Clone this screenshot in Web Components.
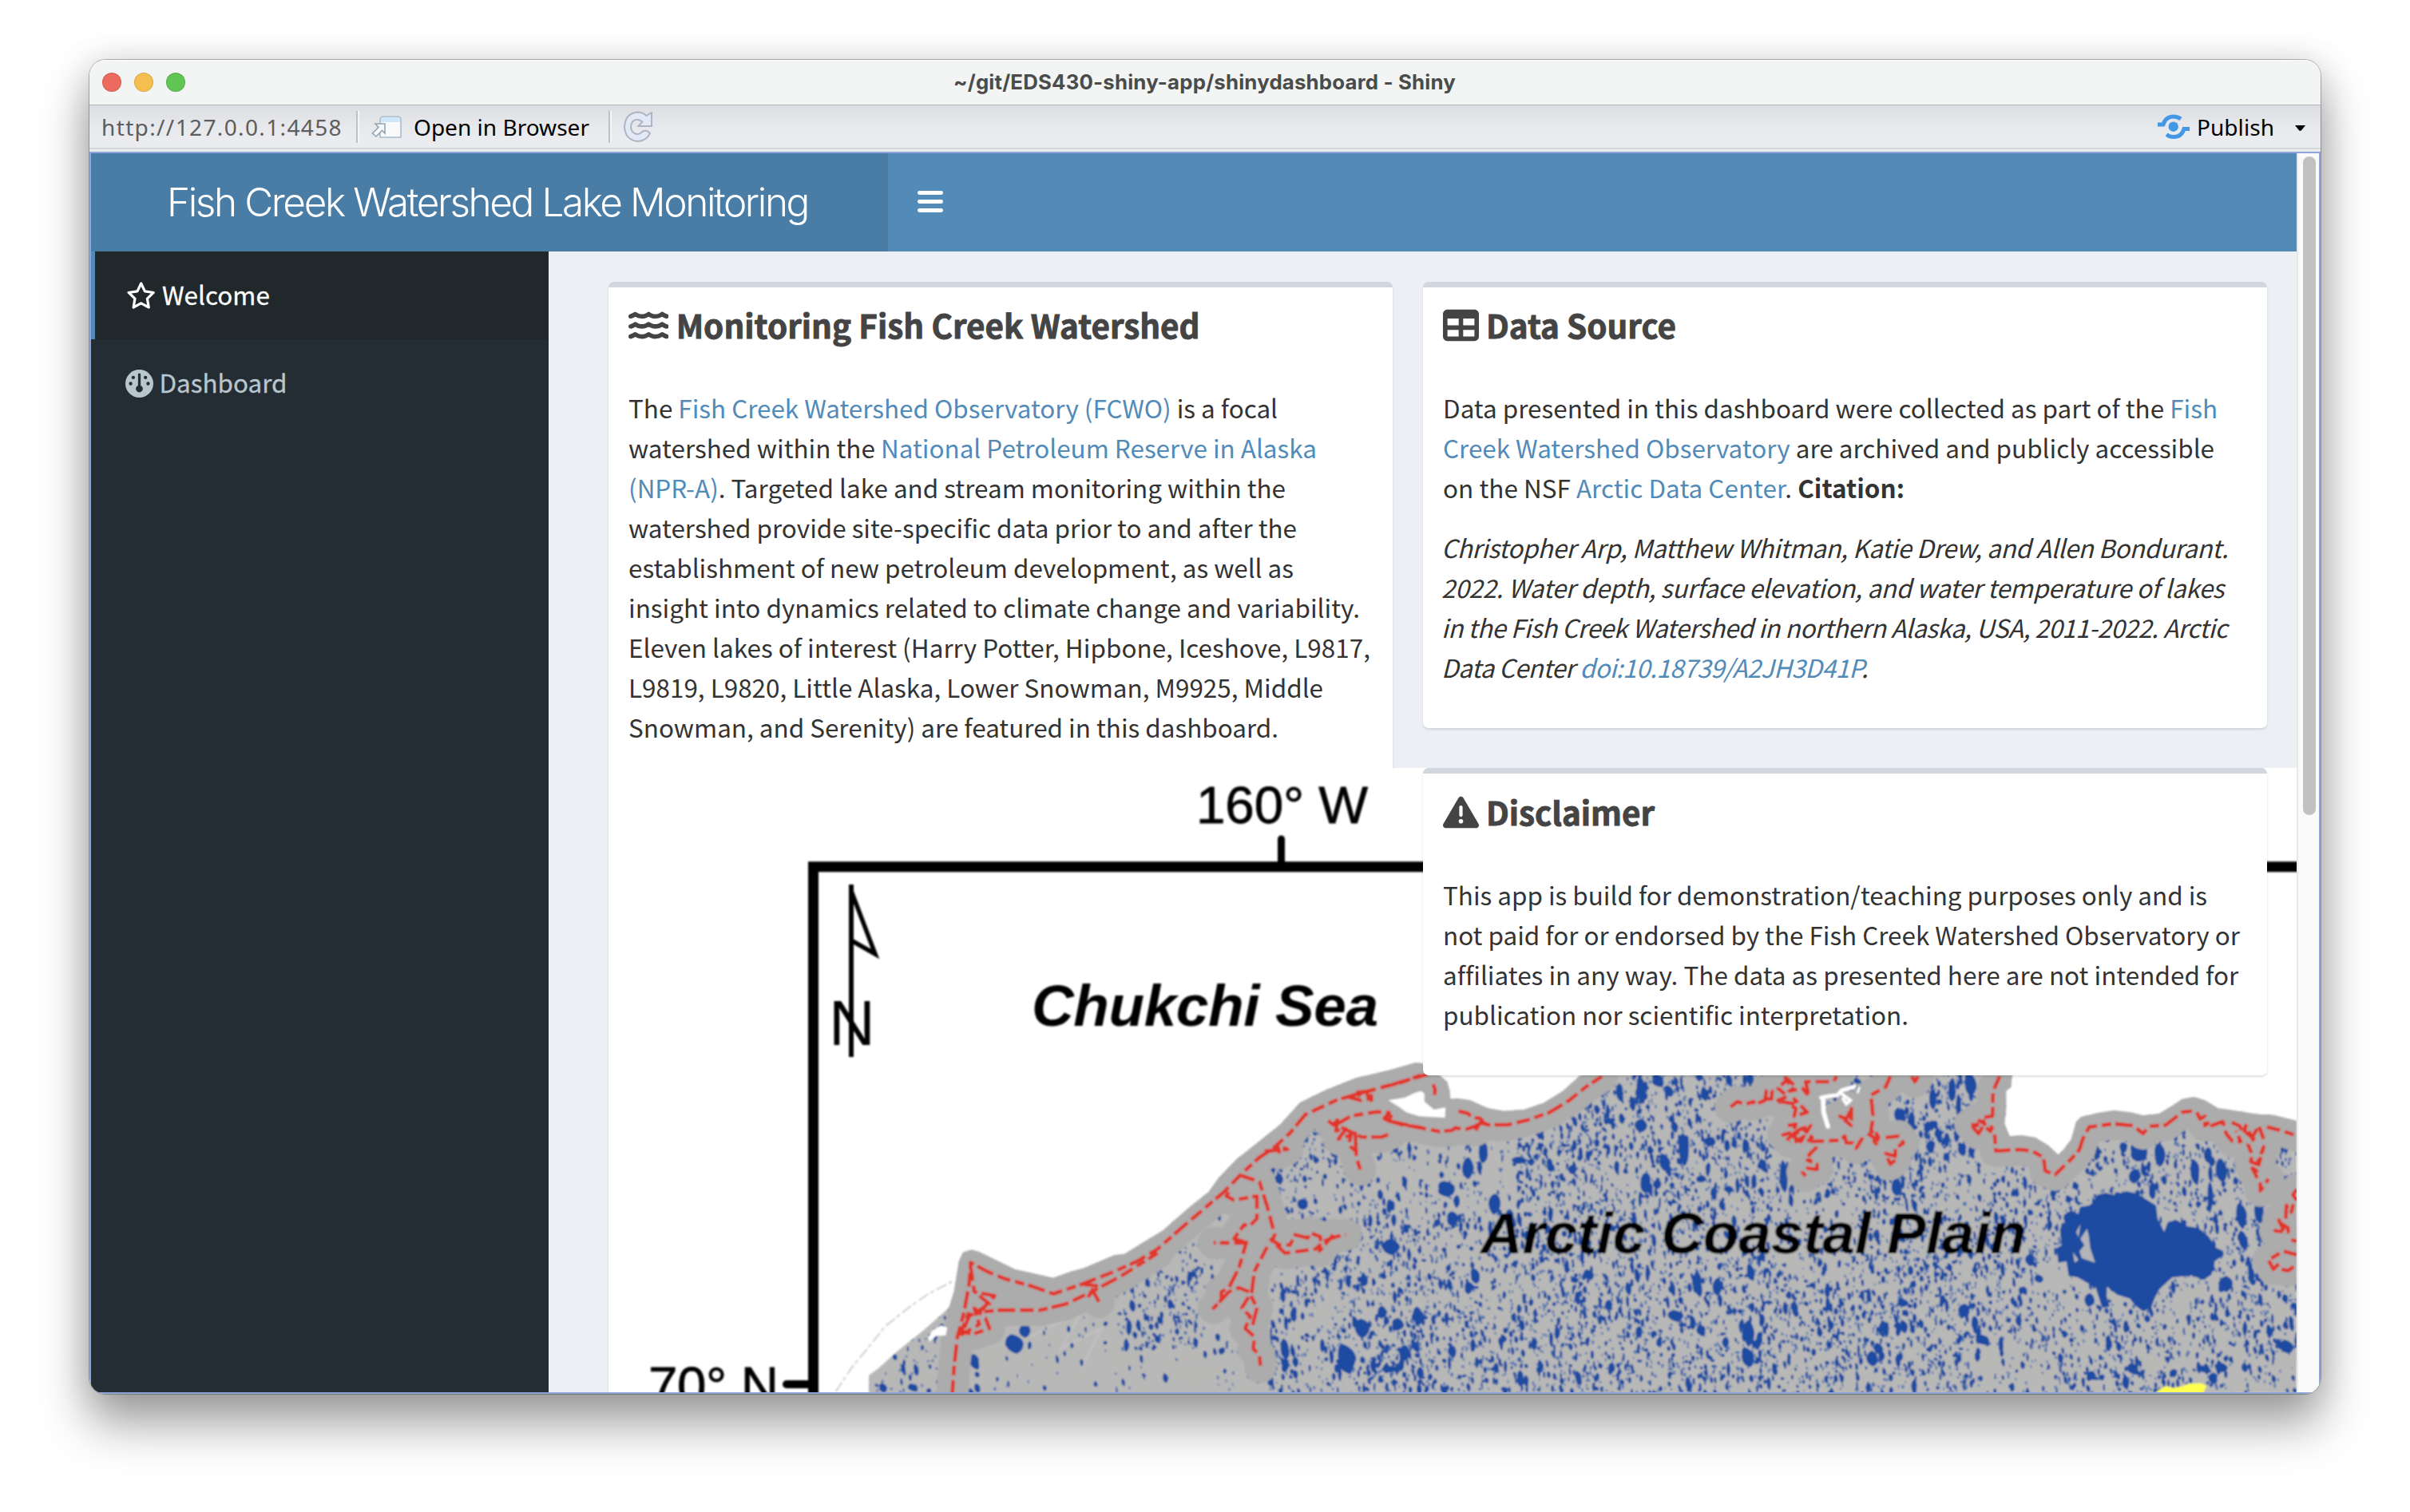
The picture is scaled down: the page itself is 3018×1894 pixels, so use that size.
<!DOCTYPE html>
<html lang="en">
<head>
<meta charset="utf-8">
<title>~/git/EDS430-shiny-app/shinydashboard - Shiny</title>
<style>
html,body{margin:0;padding:0;background:#fff}
body{width:3018px;height:1894px;overflow:hidden;box-sizing:border-box;padding:75px 0 0 112px;font-family:"Noto Sans CJK SC","Noto Sans",sans-serif}
a{color:#528ab8;text-decoration:none}
</style>
</head>
<body>
<app-window>
  <title-bar slot="title"><fit-line w="629">~/git/EDS430-shiny-app/shinydashboard - Shiny</fit-line></title-bar>
  <tool-bar slot="tools"></tool-bar>
  <dash-header slot="header"><fit-line w="803">Fish Creek Watershed Lake Monitoring</fit-line></dash-header>
  <side-menu slot="side">
    <menu-item icon="star" active><fit-line w="135">Welcome</fit-line></menu-item>
    <menu-item icon="gauge"><fit-line w="160">Dashboard</fit-line></menu-item>
  </side-menu>
  <dash-box slot="left" icon="water" tall>
    <fit-line slot="title" w="656">Monitoring Fish Creek Watershed</fit-line>
    <fit-line w="813">The <a>Fish Creek Watershed Observatory (FCWO)</a> is a focal</fit-line>
    <fit-line w="862">watershed within the <a>National Petroleum Reserve in Alaska</a></fit-line>
    <fit-line w="823"><a>(NPR-A)</a>. Targeted lake and stream monitoring within the</fit-line>
    <fit-line w="837">watershed provide site-specific data prior to and after the</fit-line>
    <fit-line w="833">establishment of new petroleum development, as well as</fit-line>
    <fit-line w="916">insight into dynamics related to climate change and variability.</fit-line>
    <fit-line w="929">Eleven lakes of interest (Harry Potter, Hipbone, Iceshove, L9817,</fit-line>
    <fit-line w="870">L9819, L9820, Little Alaska, Lower Snowman, M9925, Middle</fit-line>
    <fit-line w="814">Snowman, and Serenity) are featured in this dashboard.</fit-line>
    <region-map></region-map>
  </dash-box>
  <dash-box slot="right" icon="table">
    <fit-line slot="title" w="238">Data Source</fit-line>
    <fit-line w="970">Data presented in this dashboard were collected as part of the <a>Fish</a></fit-line>
    <fit-line w="966"><a>Creek Watershed Observatory</a> are archived and publicly accessible</fit-line>
    <fit-line w="578">on the NSF <a>Arctic Data Center</a>. <b>Citation:</b></fit-line>
    <fit-line w="985" style="font-style:italic;margin:25px 0 0 -2px">Christopher Arp, Matthew Whitman, Katie Drew, and Allen Bondurant.</fit-line>
    <fit-line w="980" style="font-style:italic;margin-left:-2px">2022. Water depth, surface elevation, and water temperature of lakes</fit-line>
    <fit-line w="984" style="font-style:italic;margin-left:-2px">in the Fish Creek Watershed in northern Alaska, USA, 2011-2022. Arctic</fit-line>
    <fit-line w="534" style="font-style:italic;margin-left:-2px">Data Center <a>doi:10.18739/A2JH3D41P</a>.</fit-line>
  </dash-box>
  <dash-box slot="right" icon="warn" style="padding-top:1px">
    <fit-line slot="title" w="211">Disclaimer</fit-line>
    <fit-line w="957">This app is build for demonstration/teaching purposes only and is</fit-line>
    <fit-line w="998">not paid for or endorsed by the Fish Creek Watershed Observatory or</fit-line>
    <fit-line w="996">affiliates in any way. The data as presented here are not intended for</fit-line>
    <fit-line w="583">publication nor scientific interpretation.</fit-line>
  </dash-box>
</app-window>

<script>
const define = (name, html, ready) => customElements.define(name, class extends HTMLElement {
  connectedCallback() {
    if (!this.shadowRoot) {
      this.attachShadow({mode: 'open'}).innerHTML = typeof html === 'function' ? html(this) : html;
      if (ready) ready(this);
    }
  }
});

const ICONS = {
  water: ['0 0 576 512', [0,144,288].map(y => `<path transform="translate(0 ${y})" d="M269.5 69.9c11.1-7.9 25.9-7.9 37 0C329 85.4 356.5 96 384 96c26.9 0 55.4-10.8 77.4-26.1c11.9-8.5 28.1-7.8 39.2 1.7c14.4 11.9 32.5 21 50.6 25.2c17.2 4 27.9 21.2 23.9 38.4s-21.2 27.9-38.4 23.9c-24.5-5.7-44.9-16.5-58.2-25C449.5 149.7 417 160 384 160c-31.9 0-60.6-9.9-80.4-18.9c-5.8-2.7-11.1-5.3-15.6-7.7c-4.5 2.4-9.7 5.1-15.6 7.7c-19.8 9-48.5 18.9-80.4 18.9c-33 0-65.5-10.3-94.5-25.8c-13.4 8.4-33.7 19.3-58.2 25c-17.2 4-34.4-6.7-38.4-23.9s6.7-34.4 23.9-38.4C42.8 92.6 61 83.5 75.3 71.6c11.1-9.5 27.3-10.1 39.2-1.7C136.7 85.2 165.1 96 192 96c27.5 0 55-10.6 77.5-26.1z"/>`).join('')],
  table: ['0 0 512 512', '<path d="M64 256V160H224v96H64zm0 64H224v96H64V320zm224 96V320H448v96H288zM448 256H288V160H448v96zM64 32C28.7 32 0 60.7 0 96V416c0 35.3 28.7 64 64 64H448c35.3 0 64-28.7 64-64V96c0-35.3-28.7-64-64-64H64z"/>'],
  warn: ['0 0 512 512', '<path d="M256 32c14.2 0 27.3 7.5 34.5 19.8l216 368c7.3 12.4 7.3 27.7 .2 40.1S486.3 480 472 480H40c-14.3 0-27.6-7.7-34.7-20.1s-7-27.8 .2-40.1l216-368C228.7 39.5 241.8 32 256 32zm0 128c-13.3 0-24 10.7-24 24V296c0 13.3 10.7 24 24 24s24-10.7 24-24V184c0-13.3-10.7-24-24-24zm32 224a32 32 0 1 0 -64 0 32 32 0 1 0 64 0z"/>'],
  gauge: ['0 0 512 512', '<path d="M0 256a256 256 0 1 1 512 0A256 256 0 1 1 0 256zm320 96c0-26.9-16.5-49.9-40-59.3V88c0-13.3-10.7-24-24-24s-24 10.7-24 24V292.7c-23.5 9.5-40 32.5-40 59.3c0 35.3 28.7 64 64 64s64-28.7 64-64zM144 176a32 32 0 1 0 0-64 32 32 0 1 0 0 64zm-16 80a32 32 0 1 0 -64 0 32 32 0 1 0 64 0zm288 32a32 32 0 1 0 0-64 32 32 0 1 0 0 64zM400 144a32 32 0 1 0 -64 0 32 32 0 1 0 64 0z"/>'],
  star: ['0 0 576 512', '<path fill="none" stroke="currentColor" stroke-width="47" stroke-linejoin="round" d="M288 30L357 174L516 197L401 309L428 468L288 393L148 468L175 309L60 197L219 174Z"/>']
};
define('fa-icon', el => {
  const [box, body] = ICONS[el.getAttribute('name')], s = +el.getAttribute('size');
  const [, , w, h] = box.split(' ');
  return `<style>:host{display:block;flex:none}svg{display:block;fill:currentColor;fill-rule:evenodd}</style><svg width="${w / h * s}" height="${s}" viewBox="${box}">${body}</svg>`;
});

define('app-window', `<style>
:host{display:block;position:relative;box-sizing:border-box;width:2794px;height:1671px;border-radius:20px;background:#f3f5f4;
box-shadow:0 0 0 1px rgba(0,0,0,.26),0 36px 60px 2px rgba(0,0,0,.37),0 0 44px rgba(0,0,0,.13)}
.clip{display:flex;flex-direction:column;height:100%;border-radius:20px;overflow:hidden}
.view{flex:1;display:flex;min-height:0;border:2px solid #8fa5d9;background:#ecf0f5}
.page{width:2762px;display:flex;flex-direction:column;overflow:hidden}
.main{flex:1;display:flex;min-height:0}
.content{display:flex;flex:1;gap:38px;padding:38px 0 0 75px;align-items:flex-start;min-width:0}
.right{display:flex;flex-direction:column;gap:50px;position:relative;z-index:2}
.scroll{flex:1;border-left:2px solid #e8e8e8;background:#fafafa;padding:4px 0 0 6px}
.thumb{width:16px;height:825px;border-radius:8px;background:#c1c1c1}
</style><div class="clip"><slot name="title"></slot><slot name="tools"></slot>
<div class="view"><div class="page"><slot name="header"></slot><div class="main"><slot name="side"></slot>
<div class="content"><slot name="left"></slot><div class="right"><slot name="right"></slot></div></div></div></div>
<div class="scroll"><div class="thumb"></div></div></div></div>`);

define('title-bar', `<style>
:host{flex:none;display:flex;align-items:center;height:57px;box-sizing:border-box;background:#f3f5f4;border-bottom:1px solid #b5b6ba;font:700 25.800px/57px Inter,sans-serif;color:#4a4c4b;box-shadow:inset 0 1px #fff}
i{width:24px;height:24px;border-radius:50%;margin-right:16px;box-sizing:border-box;border:1px solid rgba(0,0,0,.12)}
.l{display:flex;width:1066px;padding-left:16px}
.t{padding-bottom:1px}
</style><div class="l"><i style="background:#ed6a5e"></i><i style="background:#f5bf4f"></i><i style="background:#61c554"></i></div><div class="t"><slot></slot></div>`);

define('tool-bar', `<style>
:host{flex:none;display:flex;align-items:center;height:58px;box-sizing:border-box;background:linear-gradient(#dcdde2,#e6e7ea 40%,#ebecef 80%) 0 0/100% 53px no-repeat,linear-gradient(#d6d7db,#d6d7db) 0 53px/100% 2px no-repeat,#ebecef;font:28px/50px "Noto Sans",sans-serif;color:#000;padding:0 0 5px 15px}
u{width:2px;height:40px;background:#bfc0c5;border-right:2px solid #f6f6f8}
svg{display:block;flex:none}
</style>
<fit-line w="302" style="color:#5c5d60">http://127.0.0.1:4458</fit-line><u style="margin-left:17px"></u>
<svg style="margin-left:15px" width="40" height="30" viewBox="0 0 40 30"><path d="M11 28V6Q11 2 16 2H32Q37 2 37 6V28Z" fill="#f8fafc" stroke="#a9bccb" stroke-width="1.6"/><path d="M12 9V6Q12 3 16 3H32Q36 3 36 6V9Z" fill="#cfe5f9"/><path d="M5 11H17V23L13.500 19.500L6 27L1.500 23L9 15.500Z" fill="#f5f7fa" stroke="#93a5b2" stroke-width="1.6"/></svg>
<fit-line w="220" style="margin-left:13px">Open in Browser</fit-line><u style="margin-left:24px"></u>
<svg style="margin-left:14px" width="38" height="40" viewBox="0 0 38 40"><path d="M29.500 6L36 2V19H19.500L24.500 13.500Q17 8 12 13.500Q8 20 12 26Q18 32.500 25 25.500Q30 23 34 28Q29 38 18 38Q3 36 2 20Q3 3 18 1.500Q25 1.500 29.500 6Z" fill="#e2e9f7" stroke="#aeb4c4" stroke-width="2"/></svg>
<span style="flex:1"></span>
<svg width="40" height="32" viewBox="0 0 40 32"><g fill="none" stroke="#4398e6" stroke-width="5"><path d="M0 13H7Q10 3 20 3Q25 3 29 6"/><path d="M40 18.500H33Q30 28.500 20 28.500Q15 28.500 11 25.500"/></g><circle cx="19.700" cy="15.700" r="6.200" fill="#4398e6"/></svg>
<fit-line w="97" style="margin-left:9px">Publish</fit-line>
<svg style="margin:3px 19px 0 26px" width="13" height="7" viewBox="0 0 13 7"><path d="M0 0H13L8 6.200Q6.500 7.500 5 6.200Z"/></svg>`);

define('dash-header', `<style>
:host{flex:none;display:flex;height:123px;background:#528ab8;color:#fff;font:300 49.500px/121px Inter,"Roboto",sans-serif}
.logo{width:998px;background:#4a7da6;box-sizing:border-box;padding:1px 0 0 95px}
.bars{display:flex;flex-direction:column;gap:6.400px;padding:47px 0 0 37px}
.bars i{display:block;width:32px;height:4.800px;border-radius:2.400px;background:#fff}
</style><div class="logo"><slot></slot></div><div class="bars"><i></i><i></i><i></i></div>`);

define('side-menu', `<style>:host{flex:none;display:block;width:573px;background:#252d34}</style><slot></slot>`);
define('menu-item', el => `<style>
:host{display:flex;align-items:center;height:110px;box-sizing:border-box;border-left:5.500px solid transparent;padding-left:37.500px;color:#b8c7ce;font-size:31.450px;line-height:50px;gap:${el.getAttribute('icon') === 'star' ? 7 : 8}px;-webkit-text-stroke:.3px}
:host([active]){background:#20282b;border-color:#528ab8;color:#fff}
.t{padding-bottom:2px}
</style><fa-icon name="${el.getAttribute('icon')}" size="35"></fa-icon><div class="t"><slot></slot></div>`);

define('dash-box', el => `<style>
:host{display:block;box-sizing:border-box;width:${el.hasAttribute('tall') ? 982 : 1057}px;${el.hasAttribute('tall') ? 'height:1500px;z-index:1;position:relative' : ''};background:#fff;border-top:7px solid #d2d6de;border-radius:7px;box-shadow:0 2px 3px rgba(0,0,0,.12);padding:0 0 51px 25px;color:#333;font-size:31.450px;line-height:50px}
.h{display:flex;align-items:center;gap:9.500px;height:50px;padding-top:22px;color:#444;font-size:40.400px;font-weight:700;-webkit-text-stroke:.9px #444}
.t{padding-bottom:1px}
.b{padding-top:54px}
fa-icon{margin-left:-.5px}
</style><div class="h"><fa-icon name="${el.getAttribute('icon')}" size="45"></fa-icon><div class="t"><slot name="title"></slot></div></div><div class="b"><slot></slot></div>`);

/* Coastline tracing: each list is digitised on one tile, then moved to page units. */
const pts = s => s.trim().split(/[ ;]+/).map(p => p.split(',').map(Number));
const A = s => pts(s).map(([x, y]) => [780 + x / 1.568, 960 + y / 1.96]);
const B = s => pts(s).map(([x, y]) => [1700 + x / 2.45, 1330 + y / 3]);
const C = s => pts(s).map(([x, y]) => [2300 + x / 2.45, 1330 + y / 3]);
const D = list => 'M' + list.map(p => p[0].toFixed(1) + ' ' + p[1].toFixed(1)).join('L');
const coast = [...A('483,1545 483,1495 500,1480 540,1435 590,1385 640,1330 650,1290 660,1215 668,1193 685,1187 700,1192 770,1235 800,1243 845,1256 880,1240 905,1232 965,1200 985,1197 1020,1170 1060,1140 1110,1085 1150,1045 1170,1010 1205,965 1245,925 1290,880 1330,825 1380,795 1440,765 1500,748 1555,728'),
  ...B('195,5 230,25 255,55 275,75 283,110 285,140 305,137 345,145 400,175 450,185 510,180 570,155 630,110 680,55 720,20'),
  ...C('538,30 538,50 535,95 520,110 520,180 515,230 530,280 570,277 610,285 650,315 680,350 700,325 720,290 735,225 750,208 800,193 850,183 900,190 940,202 990,195 1030,165 1060,140 1095,133 1130,145 1170,175 1230,185 1290,197 1340,200 1412,222 1412,1245')];
const reds = [
  A('647,1540 650,1480 657,1400 670,1340 680,1270 683,1218 715,1240 750,1258 800,1275 845,1295 900,1272 965,1240 1010,1215 1050,1185 1100,1130 1180,1045 1215,1000 1250,960 1275,940 1310,900 1340,855 1400,820 1440,805 1500,785 1555,765 1585,755'),
  A('1568,887 1530,880 1495,865 1505,850 1480,848 1430,858 1400,880 1450,910 1490,910 1510,900'),
  A('1385,870 1395,880 1403,868 1400,895 1420,890 1405,915 1430,905 1425,930 1440,945 1438,900 1440,960 1448,990'),
  A('683,1230 690,1290 730,1300 700,1340 740,1335 820,1335 870,1320 920,1290 980,1250 1050,1195'),
  A('700,1300 720,1320 680,1350 665,1395 700,1370 690,1330 712,1355 720,1380 685,1395 665,1385 680,1340'),
  A('1215,1005 1250,1020 1265,1080 1280,1150 1275,1165 1300,1195 1360,1185 1378,1165 1400,1155 1420,1150'),
  A('1270,1160 1290,1175 1310,1175 1320,1150 1345,1158 1350,1145 1370,1155 1368,1190 1395,1150'),
  A('1190,1045 1185,1055 1200,1065 1245,1055 1245,1110 1230,1130 1220,1125 1200,1160 1228,1170 1160,1170'),
  A('1225,1165 1210,1230 1190,1280 1175,1290 1175,1310 1160,1330 1190,1290 1210,1280 1230,1290 1245,1330 1235,1380'),
  A('1265,1180 1240,1240 1235,1290 1215,1330 1232,1350 1222,1380 1240,1400 1238,1430 1250,1445 1252,1475'),
  A('905,1272 930,1275 915,1300 922,1285 935,1315'),
  A('1260,945 1305,940 1285,930 1290,950'), A('1425,812 1450,820 1470,815 1468,798 1440,800'),
  B('0,130 15,115 40,110 30,125 45,150'), B('75,95 130,80 195,50'), B('232,85 238,105 237,125'),
  B('120,230 95,222 80,210 85,197 103,205 95,222 130,232 200,250 250,262 290,258 300,248 330,255 360,243 380,225 400,237 460,237 520,220 590,190 650,145 700,95 750,55'),
  B('310,185 340,195 350,210 375,212 395,235 375,230 362,258'),
  B('1145,170 1165,150 1190,160 1215,150 1220,160 1250,145 1255,108 1272,110 1270,140 1255,140'),
  B('1300,155 1290,145 1320,130 1290,100 1320,65 1345,95 1325,110 1365,100 1385,130 1375,75 1430,75 1460,75 1470,55'),
  B('1300,150 1350,160 1340,140 1380,190 1340,205 1345,175 1320,160'), B('1310,55 1325,85'),
  B('1320,240 1345,235 1335,265 1305,275 1320,290 1350,260 1345,300 1370,280 1380,300 1395,285 1365,250 1330,275 1360,300 1390,240 1355,255 1325,300'),
  B('1390,300 1480,295 1495,280 1500,305 1520,305 1530,325 1550,285'),
  B('1410,320 1385,350 1395,370 1380,370 1410,385 1410,405 1380,400 1365,415 1375,430'),
  B('1515,170 1515,240 1480,205 1500,215 1512,185'),
  C('165,55 150,95 105,125 108,160 112,210 105,260 118,270 115,300 130,320'), C('95,270 135,300 120,265'), C('150,285 190,280 205,305 180,325 180,355 150,345 165,385 180,370'),
  C('230,55 240,75 250,55'),
  C('500,55 480,110 478,205 445,210 455,235 430,215 432,240 410,235 435,270 450,240 472,262 475,245 485,280 488,335 560,330 600,335 635,360 640,410 670,425 720,365 745,330 755,290 775,245 850,233 910,240 940,270 960,242 1010,238 1060,190 1090,185'),
  C('1105,190 1115,215 1130,205 1130,240 1145,225 1150,240 1185,225 1195,270 1215,300 1240,300 1225,260'),
  C('1212,228 1235,240 1250,270 1255,240 1275,285 1295,240 1310,290'), C('1320,245 1360,257 1412,278'),
  C('1255,265 1280,290 1262,310 1275,350 1270,375 1290,385 1310,320 1290,410 1275,400 1300,460 1300,485 1325,440'),
  C('1412,480 1400,500 1412,520 1400,540 1395,565 1380,540 1378,590'), C('1355,590 1370,630 1345,635 1385,640 1385,625 1360,605'),
  C('1412,725 1370,712 1325,745 1340,780 1360,755'), C('1365,780 1385,785 1412,762'), C('1395,670 1412,675')
];
const lakes = [[C,'800,340,10,25 825,365,7,12 880,322,14,20 925,340,28,36 990,350,18,45 915,430,16,28 970,485,12,32 1005,445,9,18 958,395,7,22 1100,415,16,50 1140,350,12,30 1180,408,18,45 1147,420,7,30 1145,510,9,60 1240,580,16,50 1295,570,17,38 1245,670,13,36 1195,835,20,30 1270,800,10,35 1345,360,8,25 410,85,20,45 355,105,13,45 375,165,8,45 295,140,12,40 185,470,16,35 190,200,14,28 230,230,12,45 280,245,10,22 290,320,14,25 385,330,12,25 415,335,10,22 315,270,9,16 390,935,18,26 445,1043,20,20 110,1115,16,30 128,1078,14,22 205,995,11,26 200,905,16,16 1130,1155,22,14 1180,1150,18,18 1155,1190,15,22 910,1155,18,22 780,1180,14,18 775,895,14,26 595,745,16,24 620,815,12,16 865,1070,10,20 1380,1070,20,26 1035,1170,12,16 720,590,24,30 700,650,16,40 715,690,22,40'],
[B,'870,105,14,55 920,70,20,25 955,110,16,22 805,115,12,35 340,400,17,42 270,478,28,30 385,340,14,42 375,400,8,28 420,535,18,40 1000,330,17,62 940,378,18,34 1140,70,10,24 1208,70,9,24 1065,120,11,28 1308,430,12,62 1330,520,8,26 1245,390,14,26 360,805,16,30 340,850,14,24 710,800,18,20 665,820,12,12 885,455,18,40 920,460,12,18 1045,835,14,50 1105,845,14,34 1200,1020,18,50 1232,1045,9,30 1195,1110,20,38 1130,1055,10,22 1055,1010,14,22 865,1015,12,22 500,1190,11,32 975,955,26,22 890,795,7,34 1205,790,12,32 1080,300,18,18 1120,540,10,20 1240,490,8,20 1195,450,8,25 1165,465,7,30 240,530,4,8 290,590,18,28 590,380,9,18 560,320,8,18 495,370,22,14 660,405,14,18 735,180,8,18 735,305,9,16 770,330,6,20 1055,440,14,14 180,960,16,16 20,820,12,24 105,540,9,20 290,1090,12,24 870,240,20,26 1280,1155,10,24 1330,700,4,12 1140,480,14,14 180,1070,14,18 100,1155,22,12 233,970,8,20'],
[A,'768,1418,17,24 692,1462,9,20 570,1525,10,10 511,1526,9,12 1420,1455,18,38 1560,1350,10,24 1508,1180,16,20 1455,1258,5,16 1505,1080,5,18 1335,1075,12,14 1450,1380,14,24 1535,1440,11,20 790,1385,10,18 1300,1430,9,26 1520,1370,12,16 1300,1470,8,18 1490,1340,9,16 1168,1402,6,10']];

function speckles() {
  let seed = 20221; const r = () => (seed = (seed * 1664525 + 1013904223) >>> 0) / 4294967296;
  const grid = Array.from({length: 6000}, r), G = (i, j) => grid[(i * 73 + j * 131 + 60000) % 6000];
  const noise = (x, y, s) => { x /= s; y /= s; const i = Math.floor(x), j = Math.floor(y), u = x - i, v = y - j;
    return (G(i, j) * (1 - u) + G(i + 1, j) * u) * (1 - v) + (G(i, j + 1) * (1 - u) + G(i + 1, j + 1) * u) * v; };
  let big = '', small = '';
  const blob = (x, y, a, b) => { const k = () => .65 + r() * .6, t = (r() - .3) * a * .8;
    return `M${(x - t).toFixed(1)} ${(y - b).toFixed(1)}Q${(x + a * k()).toFixed(1)} ${(y - b * .7).toFixed(1)} ${(x + a * k()).toFixed(1)} ${y.toFixed(1)}Q${(x + a * k()).toFixed(1)} ${(y + b * .8).toFixed(1)} ${(x + t).toFixed(1)} ${(y + b).toFixed(1)}Q${(x - a * k()).toFixed(1)} ${(y + b * .7).toFixed(1)} ${(x - a * k()).toFixed(1)} ${y.toFixed(1)}Q${(x - a).toFixed(1)} ${(y - b * .8).toFixed(1)} ${(x - t).toFixed(1)} ${(y - b).toFixed(1)}Z`; };
  for (let n = 0; n < 33000; n++) {
    const x = 1085 + r() * 1795, y = 1335 + r() * 412;
    let d = .21 + .74 * (noise(x, y, 42) * .6 + noise(x, y, 15) * .5 - .22);
    if (x < 1230) d *= .5 + (y < 1690 && x > 1180 ? .3 : 0);
    else if (x < 1590) d *= y > 1590 && x > 1400 && y < 1690 && x < 1500 ? .85 : (y > 1600 ? .12 : .3);
    else if (x < 1700) d *= .85;
    else if (x < 1900 && y < 1520) d *= .4;
    if (x > 2480) d *= .85;
    if (r() > d) continue;
    const q = r();
    if (q > .955) big += blob(x, y, 2 + r() * 2.2, 4 + r() * 6);
    else if (q > .55) big += blob(x, y, 1.2 + r() * 1.6, 1.8 + r() * 3.6);
    else small += blob(x, y, .9 + r() * 1.1, 1.1 + r() * 2);
  }
  for (const [tile, list] of lakes) for (const s of list.split(' ')) {
    const [x, y, a, b] = s.split(',').map(Number), [[px, py], [qx, qy]] = tile(`${x},${y} ${x + a},${y + b}`);
    big += blob(px, py, qx - px, qy - py);
  }
  return `<path d="${small}" fill="#3f66b0" opacity=".8"/><path d="${big}" fill="#1e4ca1"/>`;
}
define('region-map', () => `<style>
:host{display:block;width:2089px;height:782px;margin-top:26px}
svg{display:block}text{font-family:"Liberation Sans",Arial,sans-serif;fill:#000}
.it{font-weight:700;font-style:italic;font-size:73px}
</style><svg width="2089" height="782" viewBox="787 962 2089 782">
<defs><clipPath id="land"><path d="${D(coast)}Z"/></clipPath>
<filter id="soft" x="0" y="0" width="100%" height="100%"><feGaussianBlur stdDeviation=".8"/></filter>
<filter id="relief" x="0" y="0" width="100%" height="100%"><feTurbulence type="fractalNoise" baseFrequency=".03 .022" numOctaves="4" seed="4"/><feColorMatrix values="0 0 0 0 .5 0 0 0 0 .5 0 0 0 0 .5 1.6 0 0 0 -.7"/></filter></defs>
<rect x="787" y="962" width="2089" height="782" fill="#fff"/>
<g filter="url(#soft)">
<path d="${D(A('418,1535 450,1475 480,1430 515,1375 560,1330 600,1295 650,1262'))}" fill="none" stroke="#cfcfcf" stroke-width="2" stroke-dasharray="14 3 5 4"/>
<g clip-path="url(#land)">
<rect x="1080" y="1300" width="1800" height="450" fill="#b8b8b7"/>
<rect x="1080" y="1300" width="1800" height="450" filter="url(#relief)" opacity=".22"/>
<path d="${D(A('800,1400 900,1340 860,1430 940,1380 900,1480'))}" fill="none" stroke="#bfbfbf" stroke-width="3"/>
${speckles()}
<g fill="none" stroke="#acacac" stroke-width="40" stroke-linejoin="round" stroke-linecap="round">${reds.map(p => `<path d="${D(p)}"/>`).join('')}</g>
</g>
<path d="${D(A('600,1402 608,1385 625,1373 637,1378 634,1397 615,1398 602,1412'))}Z" fill="#fff"/>
<path d="${D(B('95,145 145,135 175,118 195,110 205,120 205,150 235,180 270,172 268,210 190,205 150,190 130,172'))}Z" fill="#fff"/>
<path d="${D(B('1422,135 1450,128 1472,126 1485,108 1525,93'))}" fill="none" stroke="#fff" stroke-width="4.500" stroke-linejoin="round" stroke-linecap="round"/>
<path d="${D(B('1428,135 1430,190 1443,243'))}" fill="none" stroke="#fff" stroke-width="5.500" stroke-linecap="round"/>
<path d="${D(B('1485,120 1512,145 1500,158 1490,140'))}" fill="none" stroke="#fff" stroke-width="4" stroke-linecap="round"/>
<path d="${D(B('1540,95 1534,118'))}" fill="none" stroke="#fff" stroke-width="2.500"/>
<path d="${D(C('785,530 800,500 825,493 850,500 890,487 920,495 940,510 980,540 985,590 1005,640 1015,605 1040,593 1075,618 1110,625 1140,655 1165,700 1185,710 1188,725 1160,750 1150,800 1125,820 1090,803 1030,810 990,855 975,890 965,925 940,938 915,915 900,890 860,875 830,845 828,880 838,920 815,925 795,850 740,810 712,805 705,750 680,755 675,700 690,690 685,630 700,620 697,575 720,560 740,575 748,545 775,540'))}Z" fill="#1e4ca1"/>
<path d="${D(C('768,628 773,650 778,700 793,755 780,750 752,738 745,712 760,690 748,665'))}Z" fill="#b3b4b8"/>
<path d="${D(C('748,610 735,640 742,660'))}Z" fill="#b3b4b8"/>
<path d="${D(C('725,715 742,745 730,755'))}Z" fill="#b3b4b8"/>
<path d="${D(C('828,850 860,875 872,900 858,925 838,890'))}Z" fill="#b7b7b6"/>
<path d="${D(C('975,1245 1010,1218 1030,1226 1060,1220 1080,1210 1120,1208 1135,1218 1130,1232 1125,1245'))}Z" fill="#ffff4f"/>
<g fill="none" stroke="#e1352a" stroke-width="4.600" stroke-linejoin="round" stroke-dasharray="17 6 12 5 22 6">${reds.map(p => `<path d="${D(p)}"/>`).join('')}</g>
<path d="M1018.500 1750V1085.700H2880" fill="none" stroke="#000" stroke-width="13"/>
<path d="M1604.500 1051V1084" stroke="#000" stroke-width="9" stroke-linecap="round"/><path d="M985 1734H1016" stroke="#000" stroke-width="10" stroke-linecap="round"/>
<path d="M1066 1108V1324" stroke="#000" stroke-width="6"/><path d="M1066 1116L1096 1195L1066 1178" fill="none" stroke="#000" stroke-width="5.500"/>
<g stroke="#000" stroke-width=".8">
<text x="1498" y="1031" font-size="65.500" textLength="215">160° W</text>
<text x="812" y="1758" font-size="65.500" textLength="163">70° N</text></g>
<text x="1038" y="1309" font-size="80">N</text>
<text class="it" x="1292" y="1285" textLength="434">Chukchi Sea</text>
<text class="it" x="1854" y="1570" textLength="683">Arctic Coastal Plain</text>
</g></svg>`);

/* A single line of copy tracked to a measured width. */
define('fit-line', `<style>:host{display:block;width:max-content;white-space:nowrap}</style><slot></slot>`, el => {
  const w = el.getBoundingClientRect().width, n = el.textContent.length;
  el.style.letterSpacing = ((+el.getAttribute('w') - w) / n).toFixed(3) + 'px';
});
</script>
</body>
</html>
